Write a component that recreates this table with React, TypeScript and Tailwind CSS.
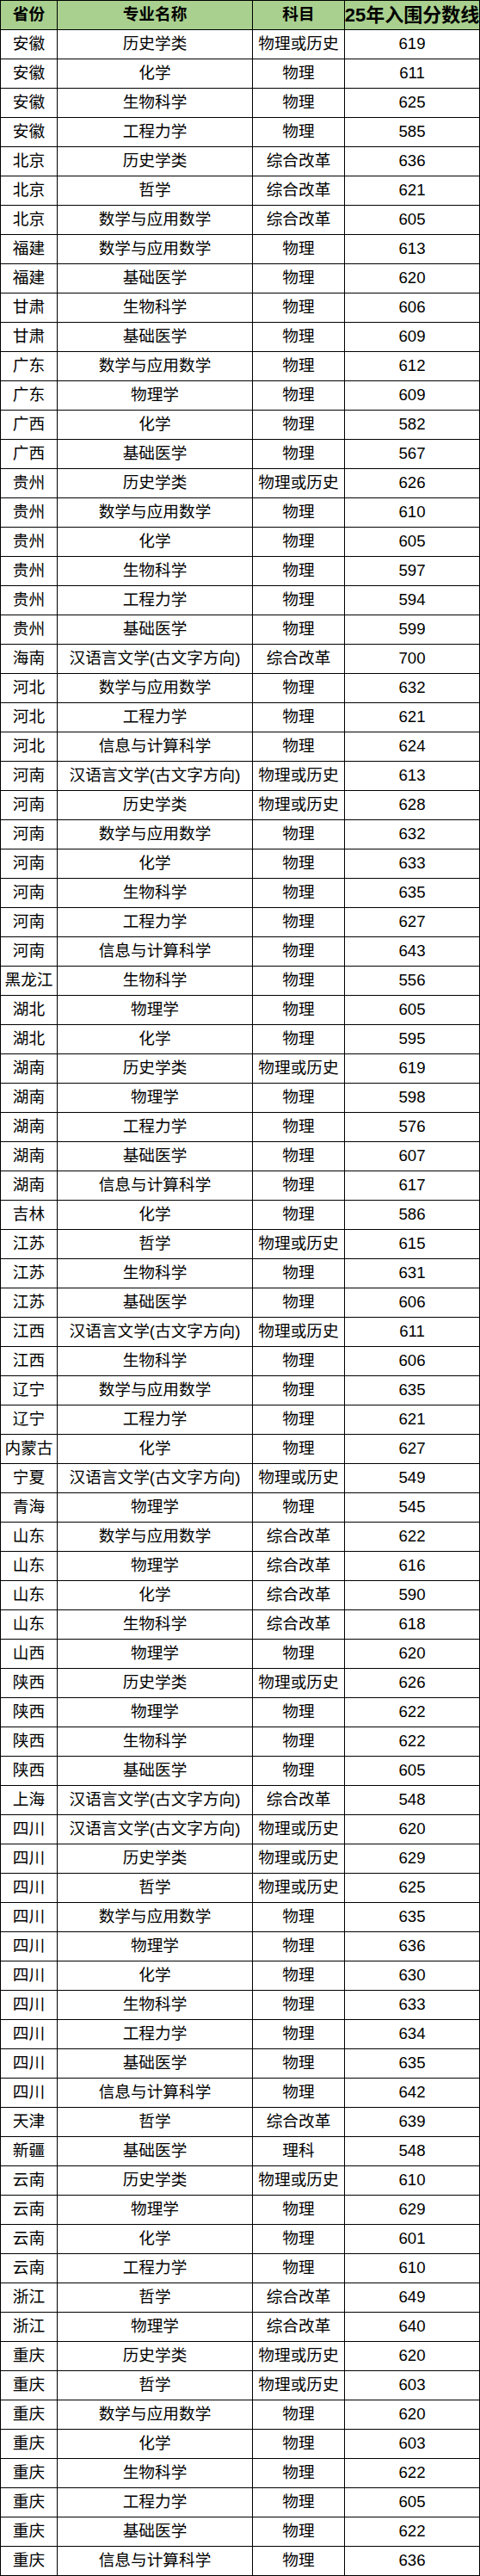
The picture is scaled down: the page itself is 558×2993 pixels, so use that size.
type Row = [string, string, string, number]

const rows: Row[] = [
  ['安徽', '历史学类', '物理或历史', 619],
  ['安徽', '化学', '物理', 611],
  ['安徽', '生物科学', '物理', 625],
  ['安徽', '工程力学', '物理', 585],
  ['北京', '历史学类', '综合改革', 636],
  ['北京', '哲学', '综合改革', 621],
  ['北京', '数学与应用数学', '综合改革', 605],
  ['福建', '数学与应用数学', '物理', 613],
  ['福建', '基础医学', '物理', 620],
  ['甘肃', '生物科学', '物理', 606],
  ['甘肃', '基础医学', '物理', 609],
  ['广东', '数学与应用数学', '物理', 612],
  ['广东', '物理学', '物理', 609],
  ['广西', '化学', '物理', 582],
  ['广西', '基础医学', '物理', 567],
  ['贵州', '历史学类', '物理或历史', 626],
  ['贵州', '数学与应用数学', '物理', 610],
  ['贵州', '化学', '物理', 605],
  ['贵州', '生物科学', '物理', 597],
  ['贵州', '工程力学', '物理', 594],
  ['贵州', '基础医学', '物理', 599],
  ['海南', '汉语言文学(古文字方向)', '综合改革', 700],
  ['河北', '数学与应用数学', '物理', 632],
  ['河北', '工程力学', '物理', 621],
  ['河北', '信息与计算科学', '物理', 624],
  ['河南', '汉语言文学(古文字方向)', '物理或历史', 613],
  ['河南', '历史学类', '物理或历史', 628],
  ['河南', '数学与应用数学', '物理', 632],
  ['河南', '化学', '物理', 633],
  ['河南', '生物科学', '物理', 635],
  ['河南', '工程力学', '物理', 627],
  ['河南', '信息与计算科学', '物理', 643],
  ['黑龙江', '生物科学', '物理', 556],
  ['湖北', '物理学', '物理', 605],
  ['湖北', '化学', '物理', 595],
  ['湖南', '历史学类', '物理或历史', 619],
  ['湖南', '物理学', '物理', 598],
  ['湖南', '工程力学', '物理', 576],
  ['湖南', '基础医学', '物理', 607],
  ['湖南', '信息与计算科学', '物理', 617],
  ['吉林', '化学', '物理', 586],
  ['江苏', '哲学', '物理或历史', 615],
  ['江苏', '生物科学', '物理', 631],
  ['江苏', '基础医学', '物理', 606],
  ['江西', '汉语言文学(古文字方向)', '物理或历史', 611],
  ['江西', '生物科学', '物理', 606],
  ['辽宁', '数学与应用数学', '物理', 635],
  ['辽宁', '工程力学', '物理', 621],
  ['内蒙古', '化学', '物理', 627],
  ['宁夏', '汉语言文学(古文字方向)', '物理或历史', 549],
  ['青海', '物理学', '物理', 545],
  ['山东', '数学与应用数学', '综合改革', 622],
  ['山东', '物理学', '综合改革', 616],
  ['山东', '化学', '综合改革', 590],
  ['山东', '生物科学', '综合改革', 618],
  ['山西', '物理学', '物理', 620],
  ['陕西', '历史学类', '物理或历史', 626],
  ['陕西', '物理学', '物理', 622],
  ['陕西', '生物科学', '物理', 622],
  ['陕西', '基础医学', '物理', 605],
  ['上海', '汉语言文学(古文字方向)', '综合改革', 548],
  ['四川', '汉语言文学(古文字方向)', '物理或历史', 620],
  ['四川', '历史学类', '物理或历史', 629],
  ['四川', '哲学', '物理或历史', 625],
  ['四川', '数学与应用数学', '物理', 635],
  ['四川', '物理学', '物理', 636],
  ['四川', '化学', '物理', 630],
  ['四川', '生物科学', '物理', 633],
  ['四川', '工程力学', '物理', 634],
  ['四川', '基础医学', '物理', 635],
  ['四川', '信息与计算科学', '物理', 642],
  ['天津', '哲学', '综合改革', 639],
  ['新疆', '基础医学', '理科', 548],
  ['云南', '历史学类', '物理或历史', 610],
  ['云南', '物理学', '物理', 629],
  ['云南', '化学', '物理', 601],
  ['云南', '工程力学', '物理', 610],
  ['浙江', '哲学', '综合改革', 649],
  ['浙江', '物理学', '综合改革', 640],
  ['重庆', '历史学类', '物理或历史', 620],
  ['重庆', '哲学', '物理或历史', 603],
  ['重庆', '数学与应用数学', '物理', 620],
  ['重庆', '化学', '物理', 603],
  ['重庆', '生物科学', '物理', 622],
  ['重庆', '工程力学', '物理', 605],
  ['重庆', '基础医学', '物理', 622],
  ['重庆', '信息与计算科学', '物理', 636],
]

const cell = 'h-[34px] border-r border-b border-black flex items-center justify-center whitespace-nowrap'

export default function App() {
  return (
    <div className="w-[558px] bg-white text-black font-['Liberation_Sans','Noto_Sans_CJK_SC',sans-serif]">
      <div className="grid grid-cols-[66px_227px_107px_157px] border-l border-t border-black text-[18.67px] leading-none">
        {/* 表头 */}
        <div className={`${cell} bg-[#a9d08e] font-bold`}>省份</div>
        <div className={`${cell} bg-[#a9d08e] font-bold`}>专业名称</div>
        <div className={`${cell} bg-[#a9d08e] font-bold`}>科目</div>
        <div className={`${cell} bg-[#a9d08e] font-bold text-[22px]`}>25年入围分数线</div>

        {rows.map(([prov, major, subj, score], i) => (
          <div key={i} className="contents">
            <div className={cell}>{prov}</div>
            <div className={cell}>{major}</div>
            <div className={cell}>{subj}</div>
            <div className={cell}>{score}</div>
          </div>
        ))}
      </div>
    </div>
  )
}
